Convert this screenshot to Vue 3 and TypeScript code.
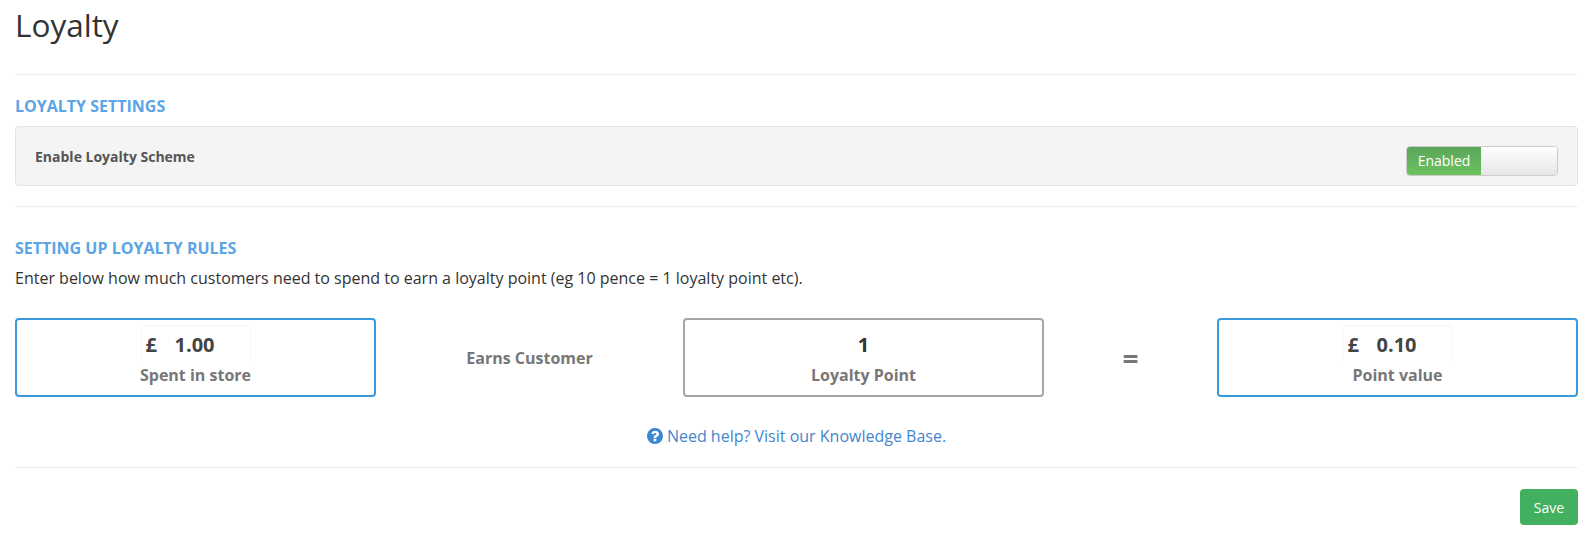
<script setup lang="ts">
interface Field {
  prefix?: string
  value: string
  label: string
}

const spent: Field = { prefix: '£', value: '1.00', label: 'Spent in store' }
const point: Field = { prefix: '£', value: '0.10', label: 'Point value' }
</script>

<template>
  <div class="page">
    <h1 class="title">Loyalty</h1>
    <hr class="rule first" />
    <h2 class="heading">LOYALTY SETTINGS</h2>
    <div class="panel">
      <span class="panel-label">Enable Loyalty Scheme</span>
      <div class="switch">
        <span class="switch-on">Enabled</span>
        <span class="switch-off"></span>
      </div>
    </div>
    <hr class="rule second" />
    <h2 class="heading two">SETTING UP LOYALTY RULES</h2>
    <p class="intro">Enter below how much customers need to spend to earn a loyalty point (eg 10 pence = 1 loyalty point etc).</p>
    <div class="rules">
      <div class="box blue">
        <div class="input"><span class="pre">{{ spent.prefix }}</span><span>{{ spent.value }}</span></div>
        <div class="cap">{{ spent.label }}</div>
      </div>
      <div class="mid earns">Earns Customer</div>
      <div class="box grey">
        <div class="plain">1</div>
        <div class="cap">Loyalty Point</div>
      </div>
      <div class="mid eq">=</div>
      <div class="box blue">
        <div class="input"><span class="pre">{{ point.prefix }}</span><span>{{ point.value }}</span></div>
        <div class="cap">{{ point.label }}</div>
      </div>
    </div>
    <div class="help">
      <svg class="help-icon" viewBox="0 0 1536 1536" width="16" height="16">
        <path fill="#3a87d4" d="M896 1248v-192q0-14-9-23t-23-9H672q-14 0-23 9t-9 23v192q0 14 9 23t23 9h192q14 0 23-9t9-23zm256-672q0-88-55.500-163T958 297t-170-41q-243 0-371 213-15 24 8 42l132 100q7 6 19 6 16 0 25-12 53-68 86-92 34-24 86-24 48 0 85.500 26t37.500 59q0 38-20 61t-68 45q-63 28-115.500 86.500T640 889v36q0 14 9 23t23 9h192q14 0 23-9t9-23q0-19 21.500-49.500T972 826q32-18 49-28.500t46-35 44.500-48 28-60.500 12.500-78zm384 192q0 209-103 385.500T1153.500 1433 768 1536t-385.500-103T103 1153.500 0 768t103-385.500T382.500 103 768 0t385.500 103T1433 382.500 1536 768z" />
      </svg>
      <a class="help-link">Need help? Visit our Knowledge Base.</a>
    </div>
    <hr class="rule third" />
    <div class="actions"><button class="save">Save</button></div>
  </div>
</template>

<style>
body { background: #fff; }
</style>

<style scoped>
.page { padding: 0 15px; font-family: "Open Sans", sans-serif; font-size: 16px; color: #333; height: 542px; box-sizing: border-box; overflow: hidden; }
.title { margin: 0; padding-top: 5px; font-size: 31.5px; font-weight: 400; line-height: 40px; color: #333; }
.rule { border: 0; border-top: 1px solid #eee; margin: 0; }
.first { margin-top: 29px; }
.second { margin-top: 20px; }
.third { margin-top: 19px; }
.heading { margin: 21px 0 0; font-size: 16px; line-height: 21px; font-weight: 700; color: #5ba4e6; }
.heading.two { margin-top: 31px; }
.panel { margin-top: 9px; height: 60px; box-sizing: border-box; background: #f4f4f4; border: 1px solid #e3e3e3; border-radius: 4px; display: flex; align-items: center; justify-content: space-between; padding: 0 19px; }
.panel-label { font-size: 14px; font-weight: 700; color: #555; }
.switch { display: flex; width: 152px; height: 30px; margin-top: 10px; box-sizing: border-box; border: 1px solid #ccc; border-radius: 4px; overflow: hidden; }
.switch-on { width: 74px; background: linear-gradient(#5ba55b, #6cc35f); color: #fff; text-align: center; line-height: 28px; font-size: 14px; }
.switch-off { flex: 1; background: linear-gradient(#fff, #e6e6e6); }
.intro { margin: 8px 0 0; line-height: 22px; }
.rules { margin-top: 29px; display: flex; align-items: stretch; }
.box { width: 361px; height: 79px; flex: none; box-sizing: border-box; border-radius: 4px; border: 2px solid #3a9bdc; text-align: center; padding-top: 5px; }
.box.grey { border-color: #a6a6a6; }
.mid { flex: none; display: flex; align-items: center; justify-content: center; font-weight: 700; color: #777; }
.earns { width: 307px; }
.eq { width: 173px; font-size: 28px; }
.input { width: 110px; height: 38px; margin: 0 auto; box-sizing: border-box; padding-left: 4px; border: 1px solid; border-color: #f3f3f3 #f9f9f9 transparent; border-radius: 4px 4px 0 0; font-size: 20px; font-weight: 700; line-height: 38px; color: #444; text-align: left; }
.plain { height: 38px; font-size: 20px; font-weight: 700; line-height: 40px; color: #333; }
.pre { display: inline-block; width: 29px; }
.cap { font-weight: 700; color: #777; line-height: 24px; }
.help { margin-top: 27px; display: flex; justify-content: center; align-items: center; gap: 4px; line-height: 24px; }
.help-link { color: #4285cd; }
.actions { display: flex; justify-content: flex-end; margin-top: 21px; }
.save { width: 58px; height: 36px; border: 0; padding: 0; border-radius: 4px; background: #43b05f; color: #fff; font: 14px "Open Sans", sans-serif; }
</style>
